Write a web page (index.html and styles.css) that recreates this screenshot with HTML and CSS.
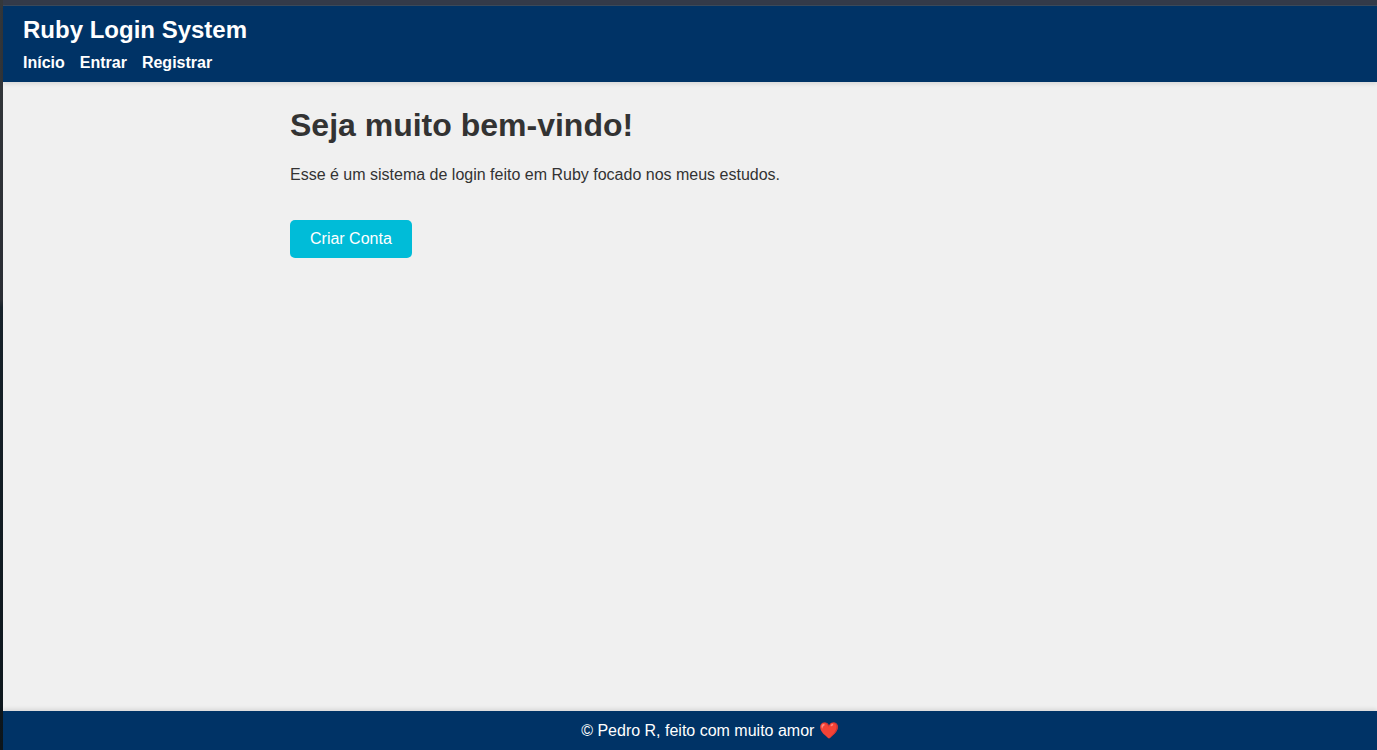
FILE: index.html
```html
<!DOCTYPE html>
<html lang="pt-BR">
<head>
  <meta charset="utf-8">
  <meta name="viewport" content="width=device-width, initial-scale=1">
  <title>Ruby Login System</title>
  <link rel="stylesheet" href="styles.css">
</head>
<body>
  <div class="page">
    <header class="header">
      <div class="brand">Ruby Login System</div>
      <nav class="nav">
        <a href="#inicio">Início</a>
        <a href="#entrar">Entrar</a>
        <a href="#registrar">Registrar</a>
      </nav>
    </header>
    <main class="content">
      <h1 class="title">Seja muito bem-vindo!</h1>
      <p class="intro">Esse é um sistema de login feito em Ruby focado nos meus estudos.</p>
      <a class="button" href="#registrar">Criar Conta</a>
    </main>
    <footer class="footer">© Pedro R, feito com muito amor ❤️</footer>
  </div>
</body>
</html>
```
FILE: styles.css
```css
* {
  box-sizing: border-box;
}

body {
  margin: 0;
  min-height: 100vh;
  display: flex;
  flex-direction: column;
  padding: 5px 0 0 3px;
  background: linear-gradient(#333a49, #333a49) 3px 0 / 100% 5px no-repeat,
    linear-gradient(#34383b 0, #2a2d34 40%, #17222a 41%, #0d161c 100%);
  color: #333;
  font-family: "Liberation Sans", Arial, sans-serif;
  font-size: 16px;
  line-height: 18px;
}

.page {
  flex: 1;
  display: flex;
  flex-direction: column;
  border-top: 1px solid #3b4a5c;
  background: #f0f0f0;
}

.header {
  padding: 10px 20px;
  background: #003366;
  color: #fff;
  box-shadow: 0 2px 4px rgba(0, 0, 0, 0.1);
}

.brand {
  font-size: 24px;
  font-weight: bold;
  line-height: 28px;
}

.nav {
  display: flex;
  gap: 15px;
  margin-top: 10px;
  font-weight: bold;
}

.nav a {
  color: inherit;
  text-decoration: none;
}

.content {
  flex: 1;
  width: 100%;
  max-width: 800px;
  margin: 0 auto;
  padding: 25px 0;
}

.title {
  margin: 0;
  font-size: 32px;
  line-height: 36px;
}

.intro {
  margin: 23px 0 36px;
}

.button {
  display: inline-block;
  padding: 10px 20px;
  border-radius: 5px;
  background: #00bcd8;
  color: #fff;
  text-decoration: none;
}

.footer {
  padding: 11px 0 10px 40px;
  background: #003366;
  color: #fff;
  text-align: center;
  box-shadow: 0 -2px 4px rgba(0, 0, 0, 0.1);
}
```
